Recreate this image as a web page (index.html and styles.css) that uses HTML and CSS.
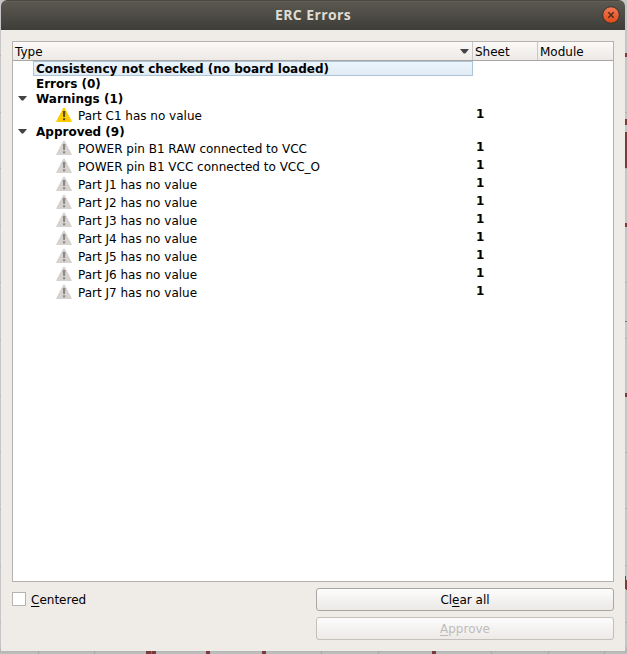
FILE: index.html
```
<!DOCTYPE html>
<html lang="en">
<head>
<meta charset="utf-8">
<title>ERC Errors</title>
<link rel="stylesheet" href="styles.css">
</head>
<body>
<svg class="schematic" width="627" height="654" viewBox="0 0 627 654" shape-rendering="crispEdges" aria-hidden="true">
  <path fill="#b2b2b2" d="M0 55h1v1h-1zM0 112h1v1h-1zM0 168h1v1h-1zM0 225h1v1h-1zM0 282h1v1h-1zM0 339h1v1h-1zM0 395h1v1h-1zM0 452h1v1h-1zM0 509h1v1h-1zM0 566h1v1h-1zM0 622h1v1h-1zM625 112h2v1h-2zM625 168h2v1h-2zM625 282h2v1h-2zM625 338h2v1h-2zM625 452h2v1h-2zM625 508h2v1h-2zM625 565h2v1h-2zM625 622h2v1h-2z"/>
  <path fill="#a6a8a8" d="M38 651h1v3h-1zM94 651h1v3h-1zM321 651h1v3h-1zM378 651h1v3h-1zM491 651h1v3h-1zM548 651h1v3h-1zM604 651h1v3h-1z"/>
  <path fill="#7d3a3c" d="M625 53h2v4h-2zM625 119h2v6h-2zM625 132h2v36h-2zM625 223h2v4h-2zM625 393h2v4h-2zM625 576h1v13h-1zM626 580h1v10h-1zM146 651h10v3h-10zM206 651h4v3h-4zM262 651h4v3h-4zM432 651h4v3h-4z"/>
  <path fill="#777" d="M625 321h2v1h-2zM151 651h1v3h-1z"/>
</svg>
<main class="window">
  <header class="titlebar">
    <h1>ERC Errors</h1>
    <svg class="close" width="18" height="18" viewBox="0 0 18 18">
      <defs><linearGradient id="orange" x2="0" y2="1"><stop stop-color="#f47a55"/><stop offset="1" stop-color="#df4a16"/></linearGradient></defs>
      <circle cx="9" cy="9" r="8.3" fill="url(#orange)" stroke="#35332e" stroke-width="1"/>
      <path d="M6.3 6.3l5.4 5.4M11.7 6.3l-5.4 5.4" stroke="#4a2c1f" stroke-width="1.4"/>
    </svg>
  </header>
  <svg width="0" height="0" class="defs">
    <symbol id="warn" viewBox="0 0 16 16">
      <path d="M7.2 1Q8 0 8.8 1L15.8 14.2Q16 15 15.2 15H.8Q0 15 .2 14.2Z" fill="currentColor"/>
      <path class="mark" d="M6.8 4H9.4L9 10H7.2zM7 11.2h2.2v2H7z"/>
    </symbol>
    <symbol id="down" viewBox="0 0 9 5"><path d="M0 0h9L5.3 4.6H3.7z" fill="#444"/></symbol>
  </svg>
  <section class="tree">
    <div class="head">
      <div class="type"><span>Type</span><svg width="9" height="5"><use href="#down"/></svg></div>
      <div class="sheet">Sheet</div>
      <div class="module">Module</div>
    </div>
    <div class="group"><span class="label selected">Consistency not checked (no board loaded)</span></div>
    <div class="group"><span class="label">Errors (0)</span></div>
    <div class="group"><svg width="9" height="5"><use href="#down"/></svg><span class="label">Warnings (1)</span></div>
    <div class="item active"><svg width="16" height="16"><use href="#warn"/></svg><span>Part C1 has no value</span><b>1</b></div>
    <div class="group"><svg width="9" height="5"><use href="#down"/></svg><span class="label">Approved (9)</span></div>
    <div class="item"><svg width="16" height="16"><use href="#warn"/></svg><span>POWER pin B1 RAW connected to VCC</span><b>1</b></div>
    <div class="item"><svg width="16" height="16"><use href="#warn"/></svg><span>POWER pin B1 VCC connected to VCC_O</span><b>1</b></div>
    <div class="item"><svg width="16" height="16"><use href="#warn"/></svg><span>Part J1 has no value</span><b>1</b></div>
    <div class="item"><svg width="16" height="16"><use href="#warn"/></svg><span>Part J2 has no value</span><b>1</b></div>
    <div class="item"><svg width="16" height="16"><use href="#warn"/></svg><span>Part J3 has no value</span><b>1</b></div>
    <div class="item"><svg width="16" height="16"><use href="#warn"/></svg><span>Part J4 has no value</span><b>1</b></div>
    <div class="item"><svg width="16" height="16"><use href="#warn"/></svg><span>Part J5 has no value</span><b>1</b></div>
    <div class="item"><svg width="16" height="16"><use href="#warn"/></svg><span>Part J6 has no value</span><b>1</b></div>
    <div class="item"><svg width="16" height="16"><use href="#warn"/></svg><span>Part J7 has no value</span><b>1</b></div>
  </section>
  <footer class="actions">
    <label class="check"><span class="box"></span><span class="text"><u>C</u>entered</span></label>
    <div class="buttons">
      <button>Cl<u>e</u>ar all</button>
      <button disabled><u>A</u>pprove</button>
    </div>
  </footer>
</main>
</body>
</html>
```

FILE: styles.css
```
* { box-sizing: border-box; }
body {
  margin: 0;
  width: 627px;
  height: 654px;
  overflow: hidden;
  background: linear-gradient(#c6c6c6 645px, #b3b5b5 651px, #bfc1c1);
  font: 12px/15px "DejaVu Sans", sans-serif;
  color: #000;
}
svg { display: block; }
.schematic { position: absolute; inset: 0; }
.defs { position: absolute; }
.window {
  position: relative;
  width: 624px;
  height: 651px;
  margin-left: 1px;
  background: #efebe7;
  border-radius: 6px 6px 0 0;
}
.titlebar {
  display: flex;
  align-items: center;
  height: 30px;
  padding: 0 5px 0 23px;
  border-radius: 6px 6px 0 0;
  background: linear-gradient(#4a4842 1px, #68655c 1px, #5b5850 2px, #3e3d38);
}
.titlebar h1 {
  flex: 1;
  margin: 0;
  text-align: center;
  font: bold 14px/18px "Open Sans", sans-serif;
  letter-spacing: .4px;
  color: #dfdbd2;
}
.tree {
  width: 602px;
  height: 541px;
  margin: 11px 0 0 11px;
  border: 1px solid #b5b2af;
  background: #fff;
}
.head {
  display: flex;
  height: 19px;
  line-height: 21px;
  border-bottom: 1px solid #aaa5a2;
  background: linear-gradient(#fcfaf8, #ece9e7);
}
.head > div { padding-left: 2px; border-right: 1px solid #cbc7c4; }
.head .type {
  display: flex;
  align-items: center;
  justify-content: space-between;
  width: 460px;
  padding-right: 3px;
}
.head .type span { padding-top: 2px; }
.head .sheet { width: 65px; }
.head .module { flex: 1; border-right: 0; }
.group { display: flex; align-items: center; height: 15px; font-weight: bold; }
.group svg { margin: 0 -14px 0 5px; }
.group .label { margin-left: 23px; padding-top: 2px; }
.group .selected {
  width: 440px;
  height: 15px;
  margin-left: 20px;
  padding: 1px 0 0 2px;
  line-height: 13px;
  border: 1px solid #adc3d7;
  background: linear-gradient(#eaf5fd, #e0ebf3);
}
.item { display: flex; height: 18px; line-height: 20px; color: #d5d2cf; }
.item svg { margin: 1px 6px 0 43px; fill: #8b8885; }
.item span { width: 398px; color: #000; }
.item b { line-height: 17px; color: #000; }
.item.active { color: #fc0; }
.item.active svg { fill: #554b20; }
.actions { display: flex; justify-content: space-between; padding: 6px 11px 0; }
.check { display: flex; gap: 5px; height: 22px; align-items: center; }
.check .box { width: 14px; height: 14px; border: 1px solid #b7b3af; background: #fff; }
.check .text { padding-top: 2px; }
u { text-underline-offset: 2px; text-decoration-thickness: 1px; text-decoration-skip-ink: none; }
.buttons { display: grid; gap: 6px; width: 298px; }
button {
  height: 23px;
  padding: 2px 0 0;
  border: 1px solid #a9a6a3;
  border-radius: 3px;
  background: linear-gradient(#fdfdfd, #ebe8e6);
  font: inherit;
  color: #000;
}
button:disabled { border-color: #c3bfbb; background: linear-gradient(#fcfcfc, #edeae8); color: #bfbcb9; }
```
